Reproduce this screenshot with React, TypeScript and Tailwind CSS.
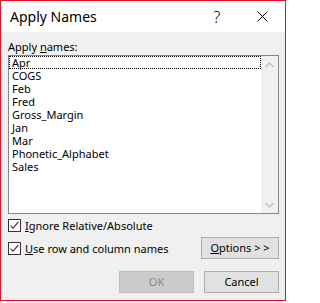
import React from "react";

const items = ["Apr", "COGS", "Feb", "Fred", "Gross_Margin", "Jan", "Mar", "Phonetic_Alphabet", "Sales"];

function Check() {
  return (
    <div className="w-[13px] h-[13px] border border-[#333333] bg-white flex items-center justify-center shrink-0">
      <svg width="11" height="11" viewBox="0 0 11 11">
        <path d="M1.5 5.5 L4 8.2 L9.5 1.8" fill="none" stroke="#333333" strokeWidth="1.1" />
      </svg>
    </div>
  );
}

export default function App() {
  return (
    <div className="w-[288px] h-[303px] bg-white" style={{ fontFamily: '"Noto Sans", "Open Sans", sans-serif' }}>
      <div className="w-[286px] h-[301px] border border-[#e81123] bg-[#f0f0f0] flex flex-col text-[11px] text-black">
        <div className="h-[31px] bg-white flex items-center pl-[9px] shrink-0">
          <span className="text-[14px] leading-none flex-1">Apply Names</span>
          <span className="text-[16px] leading-none w-[46px] text-center font-light">?</span>
          <div className="w-[45px] flex justify-center">
            <svg width="11" height="11" viewBox="0 0 11 11">
              <path d="M0.5 0.5 L10.5 10.5 M10.5 0.5 L0.5 10.5" stroke="#000" strokeWidth="1" />
            </svg>
          </div>
        </div>
        <div className="flex flex-col pl-[7px] pr-[6px] pt-[7px]">
          <div className="h-[16px] leading-[16px]">
            Apply <span className="underline">n</span>ames:
          </div>
          <div className="h-[159px] border border-[#828790] bg-white flex">
            <div className="flex-1 flex flex-col">
              {items.map((it, i) => (
                <div
                  key={it}
                  className={
                    i === 0
                      ? "h-[13px] leading-[11px] border border-dotted border-black pl-[2px]"
                      : "h-[13px] leading-[13px] pl-[3px]"
                  }
                >
                  {it}
                </div>
              ))}
            </div>
            <div className="w-[17px] bg-[#f0f0f0] flex flex-col justify-between">
              <div className="h-[17px] flex items-center justify-center">
                <svg width="9" height="6" viewBox="0 0 9 6">
                  <path d="M0.5 5 L4.5 1 L8.5 5" fill="none" stroke="#c0c0c0" strokeWidth="1.3" />
                </svg>
              </div>
              <div className="h-[17px] flex items-center justify-center">
                <svg width="9" height="6" viewBox="0 0 9 6">
                  <path d="M0.5 1 L4.5 5 L8.5 1" fill="none" stroke="#c0c0c0" strokeWidth="1.3" />
                </svg>
              </div>
            </div>
          </div>
          <div className="mt-[5px] h-[13px] flex items-center gap-[4px]">
            <Check />
            <span className="leading-[13px]">
              <span className="underline">I</span>gnore Relative/Absolute
            </span>
          </div>
          <div className="mt-[5px] h-[22px] flex items-center gap-[4px]">
            <Check />
            <span className="flex-1 leading-[13px]">
              <span className="underline">U</span>se row and column names
            </span>
            <div className="w-[78px] h-[22px] border border-[#adadad] bg-[#e1e1e1] flex items-center justify-center">
              <span>
                <span className="underline">O</span>ptions &gt; &gt;
              </span>
            </div>
          </div>
          <div className="mt-[12px] flex justify-end gap-[10px]">
            <div className="w-[75px] h-[22px] border border-[#bfbfbf] bg-[#cccccc] text-[#8a8a8a] flex items-center justify-center">
              OK
            </div>
            <div className="w-[75px] h-[22px] border border-[#adadad] bg-[#e1e1e1] flex items-center justify-center">
              Cancel
            </div>
          </div>
        </div>
      </div>
    </div>
  );
}
